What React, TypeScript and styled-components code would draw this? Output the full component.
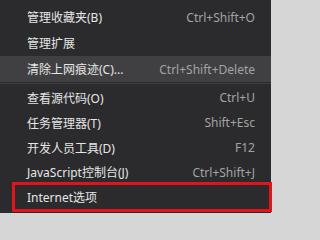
import React from 'react';
import styled, { createGlobalStyle } from 'styled-components';

const Global = createGlobalStyle`
  html, body {
    margin: 0;
    padding: 0;
    background: #d6d6d6;
  }
`

const Page = styled.div`
  position: relative;
  width: 274px;
  height: 217px;
  overflow: hidden;
`

const Menu = styled.ul`
  list-style: none;
  margin: 0;
  padding: 4px 0 0;
  width: 271px;
  height: 213px;
  box-sizing: border-box;
  background: #2b2b2d;
  font-family: "Noto Sans", "Noto Sans CJK SC", sans-serif;
  font-size: 12px;
`

const Item = styled.li<{ $active?: boolean; $h: number }>`
  display: flex;
  align-items: center;
  justify-content: space-between;
  height: ${p => p.$h}px;
  padding: 0 16px 0 27px;
  background: ${p => (p.$active ? '#404042' : 'transparent')};
  color: #e6e6e6;
`

const Shortcut = styled.span`
  color: #a3a3a3;
`

const Separator = styled.li`
  height: 1px;
  margin: 1px 0;
  background: #3e3e40;
`

const Mark = styled.div`
  position: absolute;
  left: 12px;
  top: 182px;
  width: 260px;
  height: 30px;
  box-sizing: border-box;
  border: 3px solid #e0141a;
`

const top = [
  { label: '管理收藏夹(B)', key: 'Ctrl+Shift+O' },
  { label: '管理扩展', key: '' },
  { label: '清除上网痕迹(C)...', key: 'Ctrl+Shift+Delete', active: true },
]

const bottom = [
  { label: '查看源代码(O)', key: 'Ctrl+U', h: 25 },
  { label: '任务管理器(T)', key: 'Shift+Esc', h: 25 },
  { label: '开发人员工具(D)', key: 'F12', h: 25 },
  { label: 'JavaScript控制台(J)', key: 'Ctrl+Shift+J', h: 24 },
  { label: 'Internet选项', key: '', h: 26 },
]

function App() {
  return (
    <Page>
      <Global />
      <Menu>
        {top.map(i => (
          <Item key={i.label} $h={26} $active={i.active}>
            <span>{i.label}</span>
            <Shortcut>{i.key}</Shortcut>
          </Item>
        ))}
        <Separator />
        {bottom.map(i => (
          <Item key={i.label} $h={i.h}>
            <span>{i.label}</span>
            <Shortcut>{i.key}</Shortcut>
          </Item>
        ))}
      </Menu>
      <Mark />
    </Page>
  )
}

export default App
